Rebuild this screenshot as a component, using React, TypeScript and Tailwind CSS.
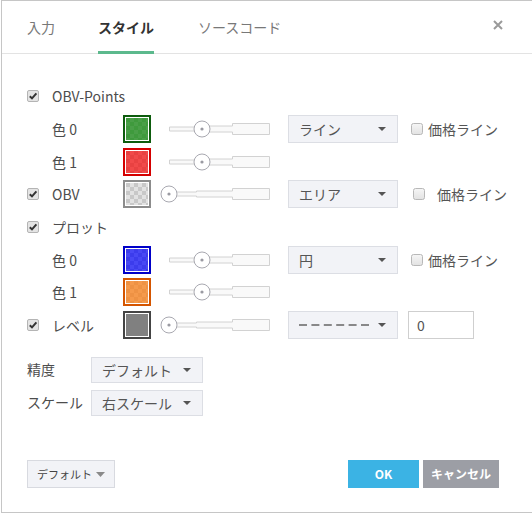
import React from "react";

const FONT = { fontFamily: '"Noto Sans CJK JP", "Liberation Sans", sans-serif' };

function Check({ checked }: { checked: boolean }) {
  if (checked) {
    return (
      <svg width="12" height="12" viewBox="0 0 12 12">
        <rect x="0.5" y="0.5" width="11" height="11" rx="1.5" fill="#e4e4e4" stroke="#b4b4b4" />
        <path d="M2.8 6.2 L5 8.4 L9.4 3.4" fill="none" stroke="#333" strokeWidth="2" />
      </svg>
    );
  }
  return (
    <svg width="12" height="12" viewBox="0 0 12 12">
      <defs>
        <linearGradient id="cbg" x1="0" y1="0" x2="0" y2="1">
          <stop offset="0" stopColor="#f6f6f6" />
          <stop offset="1" stopColor="#e2e2e2" />
        </linearGradient>
      </defs>
      <rect x="0.5" y="0.5" width="11" height="11" rx="2" fill="url(#cbg)" stroke="#b8b8b8" />
    </svg>
  );
}

function Swatch({ border, a, b, id }: { border: string; a: string; b: string; id: string }) {
  return (
    <svg width="28" height="28" viewBox="0 0 28 28" className="shrink-0">
      <defs>
        <pattern id={id} x="3" y="3" width="8" height="8" patternUnits="userSpaceOnUse">
          <rect width="8" height="8" fill={a} />
          <rect width="4" height="4" fill={b} />
          <rect x="4" y="4" width="4" height="4" fill={b} />
        </pattern>
      </defs>
      <rect x="1" y="1" width="26" height="26" fill="#fff" stroke={border} strokeWidth="2" />
      <rect x="3" y="3" width="22" height="22" fill={`url(#${id})`} />
    </svg>
  );
}

function Slider({ pos }: { pos: number }) {
  return (
    <svg width="110" height="20" viewBox="0 0 110 20" className="shrink-0">
      <path
        d="M9.5 8 H36.5 V7 H72.5 V4.5 H109.5 V15.5 H72.5 V13 H36.5 V12 H9.5 Z"
        fill="#f9f9f9"
        stroke="#d2d2d2"
      />
      <circle cx={pos} cy="10" r="8" fill="#fff" stroke="#a8a8b0" />
      <circle cx={pos} cy="10" r="1.6" fill="#9a9aa2" />
    </svg>
  );
}

function Caret({ big }: { big?: boolean }) {
  return big ? (
    <svg width="9" height="5" viewBox="0 0 9 5">
      <path d="M0 0 H9 L4.5 5 Z" fill="#8a8a8a" />
    </svg>
  ) : (
    <svg width="8" height="4" viewBox="0 0 8 4">
      <path d="M0 0 H8 L4 4 Z" fill="#555" />
    </svg>
  );
}

function Dashes() {
  return (
    <svg width="70" height="4" viewBox="0 0 70 4" className="block">
      <path d="M0 2 H70" stroke="#666" strokeWidth="1.4" strokeDasharray="8 4.4" />
    </svg>
  );
}

function Select({ value, w, h }: { value: React.ReactNode; w: string; h: string }) {
  return (
    <div
      className={`${w} ${h} flex items-center justify-between pl-[10px] pr-[11px] bg-[#f2f3f7] border border-[#dcdee4] text-[14px] text-[#555]`}
    >
      <span className="leading-none">{value}</span>
      <Caret />
    </div>
  );
}

function PriceLine({ wide }: { wide?: boolean }) {
  return (
    <div className={`flex items-center ${wide ? "ml-[15px] gap-[12px]" : "ml-[13px] gap-[5px]"}`}>
      <Check checked={false} />
      <span className="text-[14px] text-[#555] leading-none whitespace-nowrap">価格ライン</span>
    </div>
  );
}

function Row({ children }: { children: React.ReactNode }) {
  return <div className="flex items-center h-[32.7px]">{children}</div>;
}

function Lead({ checked, label }: { checked?: boolean; label: string }) {
  return (
    <>
      <div className="w-[25px] shrink-0 flex">{checked !== undefined && <Check checked={checked} />}</div>
      <div className="w-[71px] shrink-0 text-[14px] text-[#4d4d4d] leading-none whitespace-nowrap">{label}</div>
    </>
  );
}

export default function App() {
  return (
    <div className="w-[532px] h-[514px] bg-white pl-px" style={FONT}>
      <div className="h-[513px] border-l border-t border-b border-[#c6c6c6] flex flex-col">
        {/* header */}
        <div className="h-[53px] flex items-stretch border-b border-[#e3e3e3] pl-[25px] pr-[29px]">
          <div className="w-[71px] flex items-center text-[14px] text-[#787878]">入力</div>
          <div className="w-[100px] flex items-center">
            <div className="h-full flex items-center border-b-[3px] border-[#5cb98d] mb-[-1px] pt-[3px] text-[14px] font-bold text-[#333]">
              スタイル
            </div>
          </div>
          <div className="flex items-center text-[14px] text-[#787878]">ソースコード</div>
          <div className="flex-1" />
          <div className="flex items-center pb-[4px]">
            <svg width="10" height="10" viewBox="0 0 10 10">
              <path d="M1 1 L9 9 M9 1 L1 9" stroke="#9a9a9a" strokeWidth="2" />
            </svg>
          </div>
        </div>

        {/* body */}
        <div className="pl-[25px] pt-[26px]">
          <Row>
            <Lead checked label="OBV-Points" />
          </Row>
          <Row>
            <Lead label="色 0" />
            <Swatch id="s1" border="#0d5c0d" a="#4a9f48" b="#3f9a3d" />
            <div className="ml-[9px]">
              <Slider pos={42} />
            </div>
            <div className="ml-[18px]">
              <Select value="ライン" w="w-[110px]" h="h-[28px]" />
            </div>
            <PriceLine />
          </Row>
          <Row>
            <Lead label="色 1" />
            <Swatch id="s2" border="#d40000" a="#f14a4a" b="#e84242" />
            <div className="ml-[9px]">
              <Slider pos={42} />
            </div>
          </Row>
          <Row>
            <Lead checked label="OBV" />
            <Swatch id="s3" border="#8c8c8c" a="#e2e2e2" b="#c8c8c8" />
            <div className="ml-[9px]">
              <Slider pos={9} />
            </div>
            <div className="ml-[18px]">
              <Select value="エリア" w="w-[110px]" h="h-[28px]" />
            </div>
            <PriceLine wide />
          </Row>
          <Row>
            <Lead checked label="プロット" />
          </Row>
          <Row>
            <Lead label="色 0" />
            <Swatch id="s4" border="#0000c8" a="#4848f4" b="#3c3cec" />
            <div className="ml-[9px]">
              <Slider pos={42} />
            </div>
            <div className="ml-[18px]">
              <Select value="円" w="w-[110px]" h="h-[28px]" />
            </div>
            <PriceLine />
          </Row>
          <Row>
            <Lead label="色 1" />
            <Swatch id="s5" border="#d45500" a="#f59a4c" b="#ee9244" />
            <div className="ml-[9px]">
              <Slider pos={42} />
            </div>
          </Row>
          <Row>
            <Lead checked label="レベル" />
            <Swatch id="s6" border="#444" a="#808080" b="#808080" />
            <div className="ml-[9px]">
              <Slider pos={9} />
            </div>
            <div className="ml-[18px]">
              <Select value={<Dashes />} w="w-[110px]" h="h-[28px]" />
            </div>
            <div className="ml-[10px] w-[66px] h-[28px] border border-[#cfcfcf] flex items-center pl-[8px] text-[14px] text-[#555]">
              0
            </div>
          </Row>

          <div className="mt-[15px] flex flex-col gap-[7px]">
            <div className="flex items-center">
              <div className="w-[64px] text-[14px] text-[#4d4d4d]">精度</div>
              <Select value="デフォルト" w="w-[112px]" h="h-[26px]" />
            </div>
            <div className="flex items-center">
              <div className="w-[64px] text-[14px] text-[#4d4d4d]">スケール</div>
              <Select value="右スケール" w="w-[112px]" h="h-[26px]" />
            </div>
          </div>
        </div>

        {/* footer */}
        <div className="mt-auto mb-[24px] flex items-center pl-[25px] pr-[33px]">
          <div className="w-[88px] h-[28px] bg-[#f2f3f7] border border-[#d8dae0] flex items-center justify-between pl-[9px] pr-[9px] text-[11px] text-[#444]">
            <span>デフォルト</span>
            <Caret big />
          </div>
          <div className="flex-1" />
          <div className="w-[71px] h-[28px] bg-[#3bb3e4] text-white text-[12px] font-bold flex items-center justify-center">
            OK
          </div>
          <div className="ml-[4px] w-[76px] h-[28px] bg-[#9c9ea5] text-white text-[12px] font-bold flex items-center justify-center">
            キャンセル
          </div>
        </div>
      </div>
    </div>
  );
}
